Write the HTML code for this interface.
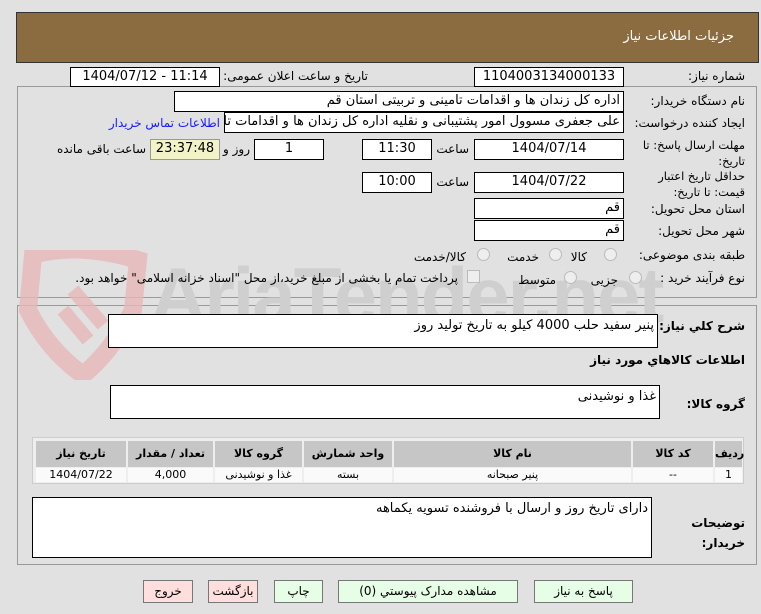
<!DOCTYPE html>
<html><head><meta charset="utf-8"><style>
body{margin:0;width:761px;height:614px;background:#e1e1e1;font-family:Tahoma,"DejaVu Sans",sans-serif;font-size:12px;color:#000;position:relative;overflow:hidden}
.a{position:absolute}
.box{position:absolute;background:#fff;border:1px solid #000;box-sizing:border-box;text-align:center;line-height:18px;font-size:13px;white-space:nowrap;overflow:hidden}
.l{position:absolute;direction:rtl;text-align:right;white-space:nowrap;font-size:12px}
.btn{position:absolute;border:1px solid #777;box-sizing:border-box;text-align:center;font-size:12px;line-height:20px;background:#e6fde6}
.pink{background:#ffdede}
.rad{position:absolute;width:11px;height:11px;border:1px solid #bbb;border-radius:50%;background:#eee}
.c{position:absolute;font-size:11px;text-align:center;box-sizing:border-box}
.h{background:#c6c6c6;font-weight:bold;top:3px;height:26px;line-height:26px}
.d{background:#fafafa;top:30px;height:14px;line-height:14px}
</style></head><body>
<div class="a" style="left:16px;top:12px;width:743px;height:51px;background:#8b6b40;border:1px solid #333;box-sizing:border-box"></div>
<div class="l" style="right:27px;top:29px;color:#fff;font-size:13px">جزئیات اطلاعات نیاز</div>

<div class="a" style="left:17px;top:86px;width:740px;height:212px;border:1px solid #999;box-sizing:border-box"></div>
<div class="a" style="left:17px;top:305px;width:740px;height:260px;border:1px solid #999;box-sizing:border-box"></div>

<svg class="a" style="left:18px;top:250px;opacity:.8" width="130" height="130" viewBox="0 0 130 130"><path d="M15 5 Q60 -8 120 10 L115 60 Q95 100 65 125 Q30 100 10 60 Z" fill="none" stroke="#e8b8b8" stroke-width="18"/><path d="M55 40 L85 75 M45 60 L70 90" stroke="#e8b8b8" stroke-width="14"/></svg>
<div class="a" style="left:150px;top:255px;font-size:78px;color:#cfcfcf;font-family:'Liberation Sans',sans-serif;font-weight:bold;letter-spacing:-2px;line-height:80px">AriaTender.net</div>

<div class="l" style="right:16px;top:69px">شماره نیاز:</div>
<div class="box" style="left:474px;top:67px;width:150px;height:20px">1104003134000133</div>
<div class="l" style="right:393px;top:69px">تاریخ و ساعت اعلان عمومی:</div>
<div class="box" style="left:70px;top:67px;width:150px;height:20px">1404/07/12 - 11:14</div>

<div class="l" style="right:16px;top:94px">نام دستگاه خریدار:</div>
<div class="box" style="left:174px;top:91px;width:450px;height:21px;text-align:right;direction:rtl;padding-right:3px">اداره کل زندان ها و اقدامات تامینی و تربیتی استان قم</div>

<div class="l" style="right:16px;top:116px">ایجاد کننده درخواست:</div>
<div class="box" style="left:224px;top:112px;width:400px;height:21px;text-align:right;direction:rtl;padding-right:3px">علی جعفری مسوول امور پشتیبانی و نقلیه اداره کل زندان ها و اقدامات تامینی و</div>
<div class="l" style="right:541px;top:116px;color:#1a1aff">اطلاعات تماس خریدار</div>

<div class="l" style="right:16px;top:137px;line-height:16px;font-size:11.5px">مهلت ارسال پاسخ: تا<br>تاریخ:</div>
<div class="box" style="left:474px;top:139px;width:150px;height:21px">1404/07/14</div>
<div class="l" style="right:292px;top:142px">ساعت</div>
<div class="box" style="left:362px;top:139px;width:70px;height:21px">11:30</div>
<div class="box" style="left:254px;top:139px;width:70px;height:21px">1</div>
<div class="l" style="right:511px;top:142px">روز و</div>
<div class="box" style="left:150px;top:139px;width:70px;height:21px;background:#f3f3c8;border-color:#999">23:37:48</div>
<div class="l" style="right:615px;top:142px">ساعت باقی مانده</div>

<div class="l" style="right:16px;top:168px;line-height:16px;font-size:11.5px">حداقل تاریخ اعتبار<br>قیمت: تا تاریخ:</div>
<div class="box" style="left:474px;top:172px;width:150px;height:21px">1404/07/22</div>
<div class="l" style="right:292px;top:175px">ساعت</div>
<div class="box" style="left:362px;top:172px;width:70px;height:21px">10:00</div>

<div class="l" style="right:16px;top:202px">استان محل تحویل:</div>
<div class="box" style="left:474px;top:198px;width:150px;height:21px;text-align:right;padding-right:3px">قم</div>
<div class="l" style="right:16px;top:224px">شهر محل تحویل:</div>
<div class="box" style="left:474px;top:220px;width:150px;height:21px;text-align:right;padding-right:3px">قم</div>

<div class="l" style="right:16px;top:248px">طبقه بندی موضوعی:</div>
<div class="rad" style="left:604px;top:248px"></div><div class="l" style="right:174px;top:250px">کالا</div>
<div class="rad" style="left:549px;top:248px"></div><div class="l" style="right:222px;top:250px">خدمت</div>
<div class="rad" style="left:477px;top:248px"></div><div class="l" style="right:295px;top:250px">کالا/خدمت</div>

<div class="l" style="right:16px;top:271px">نوع فرآیند خرید :</div>
<div class="rad" style="left:629px;top:271px"></div><div class="l" style="right:143px;top:273px">جزیی</div>
<div class="rad" style="left:564px;top:271px"></div><div class="l" style="right:205px;top:273px">متوسط</div>
<div class="a" style="left:467px;top:270px;width:11px;height:11px;border:1px solid #bbb;background:#eee"></div>
<div class="l" style="right:303px;top:271px">پرداخت تمام یا بخشی از مبلغ خرید،از محل "اسناد خزانه اسلامی" خواهد بود.</div>

<div class="l" style="right:16px;top:319px;font-weight:bold">شرح کلي نياز:</div>
<div class="box" style="left:108px;top:314px;width:550px;height:34px;text-align:right;direction:rtl;padding-right:3px;line-height:22px;background:#fff">پنیر سفید حلب 4000 کیلو به تاریخ تولید روز</div>
<div class="l" style="right:16px;top:353px;font-weight:bold">اطلاعات کالاهاي مورد نياز</div>
<div class="l" style="right:16px;top:397px;font-weight:bold">گروه کالا:</div>
<div class="box" style="left:110px;top:385px;width:550px;height:34px;text-align:right;direction:rtl;padding-right:3px;line-height:22px">غذا و نوشیدنی</div>

<div class="a" style="left:32px;top:437px;width:712px;height:47px;border:1px solid #ccc;box-sizing:border-box;background:#eee">
<div class="c h" style="left:682px;width:27px">ردیف</div><div class="c d" style="left:682px;width:27px">1</div>
<div class="c h" style="left:600px;width:80px">کد کالا</div><div class="c d" style="left:600px;width:80px">--</div>
<div class="c h" style="left:361px;width:237px">نام کالا</div><div class="c d" style="left:361px;width:237px">پنیر صبحانه</div>
<div class="c h" style="left:271px;width:88px">واحد شمارش</div><div class="c d" style="left:271px;width:88px">بسته</div>
<div class="c h" style="left:182px;width:87px">گروه کالا</div><div class="c d" style="left:182px;width:87px">غذا و نوشیدنی</div>
<div class="c h" style="left:95px;width:85px">تعداد / مقدار</div><div class="c d" style="left:95px;width:85px">4,000</div>
<div class="c h" style="left:3px;width:90px">تاریخ نیاز</div><div class="c d" style="left:3px;width:90px">1404/07/22</div>
</div>

<div class="l" style="right:16px;top:513px;font-weight:bold;line-height:20px">توضیحات<br>خریدار:</div>
<div class="box" style="left:32px;top:497px;width:620px;height:61px;text-align:right;direction:rtl;padding-right:3px;line-height:22px;white-space:normal">دارای تاریخ روز و ارسال با فروشنده تسویه یکماهه</div>

<div class="btn" style="left:534px;top:580px;width:99px;height:23px">پاسخ به نیاز</div>
<div class="btn" style="left:338px;top:580px;width:180px;height:23px">مشاهده مدارک پیوستي (0)</div>
<div class="btn" style="left:274px;top:580px;width:49px;height:23px">چاپ</div>
<div class="btn pink" style="left:208px;top:580px;width:50px;height:23px">بازگشت</div>
<div class="btn pink" style="left:143px;top:580px;width:50px;height:23px">خروج</div>
</body></html>
